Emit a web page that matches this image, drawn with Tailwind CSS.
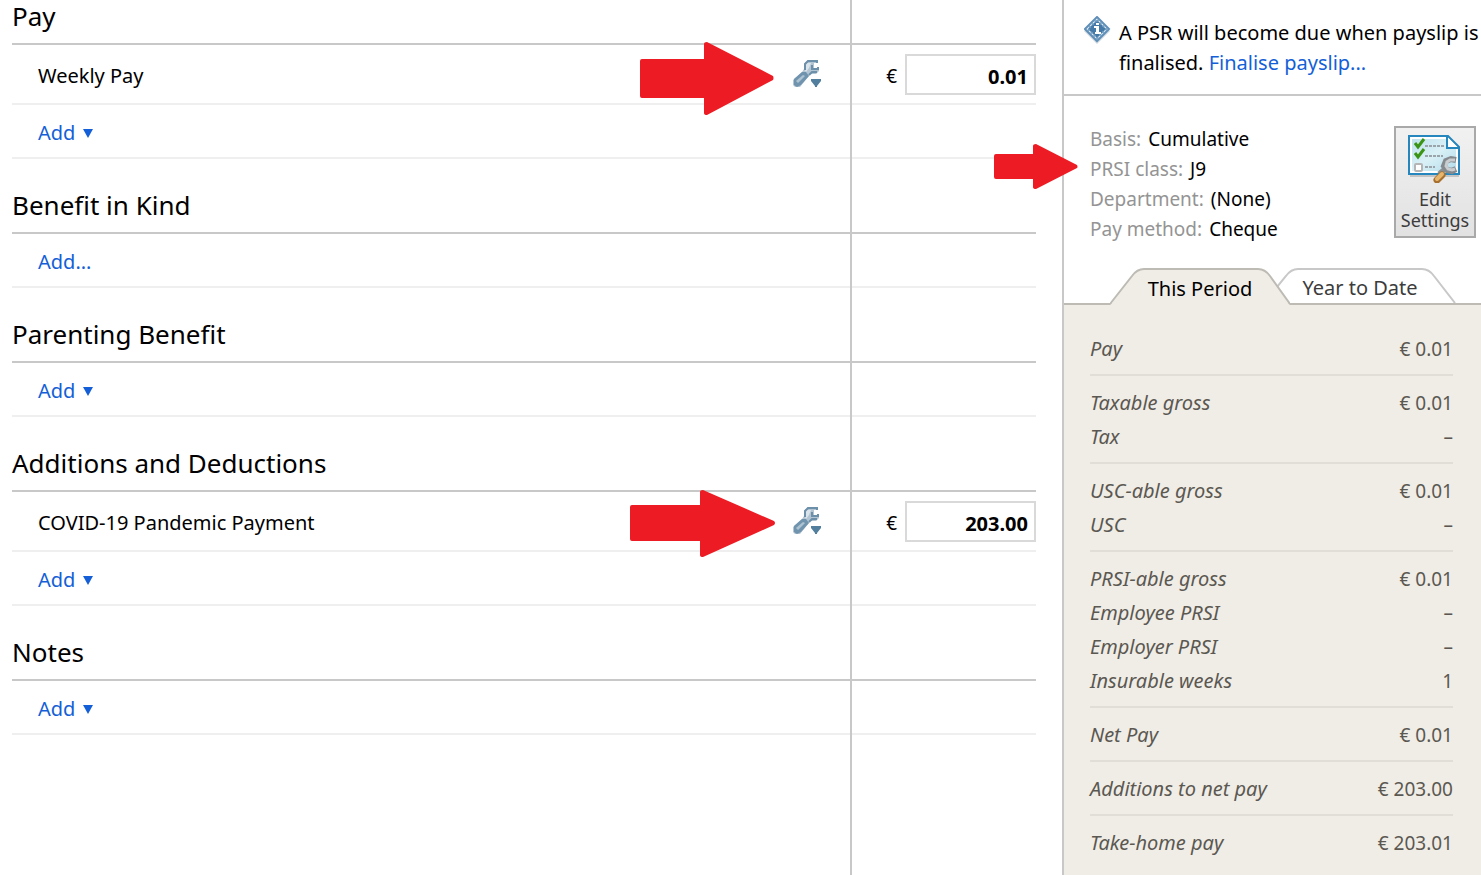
<!DOCTYPE html>
<html lang="en">
<head>
    <meta charset="UTF-8">
    <meta name="viewport" content="width=device-width, initial-scale=1.0">
    <title>Payslip</title>
    <script src="https://cdn.jsdelivr.net/npm/@tailwindcss/browser@4"></script>
</head>
<body class="bg-white text-black font-['Noto_Sans',sans-serif] text-[20px] overflow-x-hidden">

<!-- Shared icons -->
<svg class="hidden">
  <symbol id="wrench" viewBox="0 0 28 28">
    <path d="M15 0h10v3h-4v5h5v3l-3 3h-6l-2 3-8 10H2l-2-2v-5l9-8 2-3V4z" fill="#b3c5d2"/>
    <path d="M1 19l8-7h4l3 4-8 9-4 2-3-2z" fill="#7194ae"/>
    <path d="M3 21l7-6 2 1-7 7z" fill="#aec3d2"/>
    <path d="M14 3h4l-2 5-3 4-1-2V6z" fill="#dbe4ea"/>
    <path d="M12 10V4l3-3h9v2M19 5v4h6v-2M24 12h-5l-3 3" fill="none" stroke="#6d90aa" stroke-width="2"/>
    <path d="M18 19h10v2l-4 5v1h-2v-1l-4-5z" fill="#537f9f"/>
  </symbol>
  <symbol id="caret" viewBox="0 0 10 9">
    <path d="M0 0h10L5 9z" fill="#145fd7"/>
  </symbol>
</svg>

<div class="flex min-h-screen">

  <!-- Payslip lines -->
  <main class="relative flex-1 min-w-0 pl-3 pr-[26px]">
    <div class="absolute inset-y-0 right-[210px] w-[2px] bg-[#c8c8c8] z-10"></div>

    <section>
      <h2 class="h-[45px] flex items-end pb-[10px] border-b-2 border-[#c8c8c8] text-[26px] leading-[34px]">Pay</h2>
      <div class="relative h-[60px] flex items-center border-b-2 border-[#efefef] pl-[26px]">
        <label for="weeklyPay" class="flex-1 pt-[3px]">Weekly Pay</label>
        <svg class="absolute right-[262px] -top-[3px] w-[134px] h-[73px]" viewBox="0 0 134 73"><path d="M2 17H64V2q0-2 3-2L133 34q1 2 0 4L67 73q-3 0-3-2V56H2q-2 0-2-2V19q0-2 2-2z" fill="#ed1c24"/></svg>
        <button type="button" aria-label="Weekly Pay options" class="w-7 mr-[60px]"><svg class="size-7"><use href="#wrench"/></svg></button>
        <div class="w-[155px] flex items-center gap-2">
          <span class="w-4 pt-1 text-right text-[19px]">€</span>
          <input id="weeklyPay" type="text" value="0.01" class="w-[131px] h-[41px] border-2 border-[#d9d9d9] px-[6px] pt-1 text-right font-bold text-[20px]">
        </div>
      </div>
      <div class="h-[54px] flex items-center border-b-2 border-[#efefef] pl-[26px] pt-1">
        <button type="button" class="flex items-center gap-2 text-[#145fd7]">Add <svg class="w-[10px] h-[9px]"><use href="#caret"/></svg></button>
      </div>
    </section>

    <section>
      <h2 class="h-[75px] flex items-end pb-[10px] border-b-2 border-[#c8c8c8] text-[26px] leading-[34px]">Benefit in Kind</h2>
      <div class="h-[54px] flex items-center border-b-2 border-[#efefef] pl-[26px] pt-1">
        <button type="button" class="text-[#145fd7]">Add...</button>
      </div>
    </section>

    <section>
      <h2 class="h-[75px] flex items-end pb-[10px] border-b-2 border-[#c8c8c8] text-[26px] leading-[34px]">Parenting Benefit</h2>
      <div class="h-[54px] flex items-center border-b-2 border-[#efefef] pl-[26px] pt-1">
        <button type="button" class="flex items-center gap-2 text-[#145fd7]">Add <svg class="w-[10px] h-[9px]"><use href="#caret"/></svg></button>
      </div>
    </section>

    <section>
      <h2 class="h-[75px] flex items-end pb-[10px] border-b-2 border-[#c8c8c8] text-[26px] leading-[34px]">Additions and Deductions</h2>
      <div class="relative h-[60px] flex items-center border-b-2 border-[#efefef] pl-[26px]">
        <label for="covidPayment" class="flex-1 pt-[3px]">COVID-19 Pandemic Payment</label>
        <svg class="absolute right-[260px] -top-[2px] w-[146px] h-[67px]" viewBox="0 0 146 67"><path d="M2 15H70V2q0-2 3-2L144 31q2 2 0 4L73 67q-3 0-3-2V51H2q-2 0-2-2V17q0-2 2-2z" fill="#ed1c24"/></svg>
        <button type="button" aria-label="COVID-19 Pandemic Payment options" class="w-7 mr-[60px]"><svg class="size-7"><use href="#wrench"/></svg></button>
        <div class="w-[155px] flex items-center gap-2">
          <span class="w-4 pt-1 text-right text-[19px]">€</span>
          <input id="covidPayment" type="text" value="203.00" class="w-[131px] h-[41px] border-2 border-[#d9d9d9] px-[6px] pt-1 text-right font-bold text-[20px]">
        </div>
      </div>
      <div class="h-[54px] flex items-center border-b-2 border-[#efefef] pl-[26px] pt-1">
        <button type="button" class="flex items-center gap-2 text-[#145fd7]">Add <svg class="w-[10px] h-[9px]"><use href="#caret"/></svg></button>
      </div>
    </section>

    <section>
      <h2 class="h-[75px] flex items-end pb-[10px] border-b-2 border-[#c8c8c8] text-[26px] leading-[34px]">Notes</h2>
      <div class="h-[54px] flex items-center border-b-2 border-[#efefef] pl-[26px] pt-1">
        <button type="button" class="flex items-center gap-2 text-[#145fd7]">Add <svg class="w-[10px] h-[9px]"><use href="#caret"/></svg></button>
      </div>
    </section>
  </main>

  <!-- Summary -->
  <aside class="w-[419px] shrink-0 border-l-2 border-[#c8c8c8] flex flex-col">

    <div class="flex gap-2 pl-5 pt-[18px] pb-4 border-b-2 border-[#c8c8c8] leading-[30px]">
      <svg class="w-[27px] h-7 shrink-0 -mt-[2px]" viewBox="0 0 27 28">
        <path d="M13 3L26 15 13 28 0 15z" fill="#cfd8df"/>
        <path d="M13 1L25 13 13 25 1 13z" fill="#e9f1f7" stroke="#5f8fb8" stroke-width="2"/>
        <path d="M13 4L22 13 13 22 4 13z" fill="#4479a8" stroke="#6f9cc0" stroke-width="2" stroke-dasharray="2 2"/>
        <path d="M12 7h3v2h-3zM10 10h5v6h2v2h-6v-2h1v-4h-2z" fill="#fff"/>
      </svg>
      <p class="whitespace-nowrap">A PSR will become due when payslip is<br>finalised. <a href="#" class="text-[#145fd7]">Finalise payslip...</a></p>
    </div>

    <div class="relative flex justify-between pl-[26px] pr-[5px] pt-7 pb-[26px]">
      <svg class="absolute -left-[70px] top-12 w-[84px] h-[45px]" viewBox="0 0 84 45"><path d="M2 10H39V2q0-2 3-2L83 21q1 2 0 3L42 45q-3 0-3-2V35H2q-2 0-2-2V12q0-2 2-2z" fill="#ed1c24"/></svg>
      <dl class="text-[19px] leading-[30px]">
        <div class="flex gap-[7px]"><dt class="text-[#949494]">Basis:</dt><dd>Cumulative</dd></div>
        <div class="flex gap-[7px]"><dt class="text-[#949494]">PRSI class:</dt><dd>J9</dd></div>
        <div class="flex gap-[7px]"><dt class="text-[#949494]">Department:</dt><dd>(None)</dd></div>
        <div class="flex gap-[7px]"><dt class="text-[#949494]">Pay method:</dt><dd>Cheque</dd></div>
      </dl>
      <button type="button" class="w-[82px] h-28 mt-[2px] border-2 border-[#a9a9a9] bg-linear-to-b from-[#f1f1f1] to-[#e2e2e2] flex flex-col items-center pt-[7px] text-[18px] leading-[21px] text-[#3c3c3c]">
        <svg class="w-[54px] h-[48px] mb-[6px] shrink-0" viewBox="0 0 54 48">
          <defs><linearGradient id="sheet" x1="0" y1="0" x2="1" y2="1"><stop offset="0" stop-color="#bfe2ee"/><stop offset=".5" stop-color="#d9f0f6"/><stop offset="1" stop-color="#b4dcea"/></linearGradient></defs>
          <path d="M2 40h49v2H2z" fill="#c4c4c4"/>
          <path d="M1 1h39l11 11v27H1z" fill="#fff" stroke="#2587bd" stroke-width="2"/>
          <path d="M4 4h34v10h10v22H4z" fill="url(#sheet)"/>
          <path d="M39 2v11h11" fill="#fff" stroke="#2587bd" stroke-width="2"/>
          <path d="M17 11h19M17 21h18M17 32h10" stroke="#9aa4aa" stroke-width="2" stroke-dasharray="3 1"/>
          <path d="M7 8l3 4 6-8M7 18l3 4 6-8" fill="none" stroke="#3c9414" stroke-width="3"/>
          <rect x="7" y="29" width="7" height="7" rx="1" fill="#fff" stroke="#b5b5b5" stroke-width="2"/>
          <path d="M31 39l7-6" stroke="#8b9094" stroke-width="5"/>
          <path d="M48 25l-5-1-5 2-2 5 3 4 5 1 4-2" fill="none" stroke="#858a8e" stroke-width="6"/>
          <path d="M47 25l-5 0-3 2-1 4 2 3 4 1 3-1" fill="none" stroke="#c9cdd0" stroke-width="3"/>
          <path d="M29 45l5-5" stroke="#a8702c" stroke-width="7" stroke-linecap="round"/>
          <path d="M29 44l5-5" stroke="#e8b56c" stroke-width="4" stroke-linecap="round"/>
        </svg>
        Edit<br>Settings
      </button>
    </div>

    <!-- Tabs -->
    <div role="tablist" class="flex h-[37px] mt-[-2px] pl-[46px] border-b-2 border-[#bdbbb4]">
      <button type="button" role="tab" aria-selected="true" class="relative z-10 w-[180px] h-[37px] pt-[5px] shrink-0">
        <svg class="absolute inset-0 w-[180px] h-[37px]" viewBox="0 0 180 37"><path d="M0 37L1 36 22 8Q27 1 34 1H148Q155 1 160 8L179 36 180 37z" fill="#f0ede6"/><path d="M0 36L22 8Q27 1 34 1H148Q155 1 160 8L180 36" fill="none" stroke="#bdbbb4" stroke-width="2"/></svg>
        <span class="relative">This Period</span>
      </button>
      <button type="button" role="tab" aria-selected="false" class="relative w-[192px] h-[35px] pt-1 -ml-[26px] shrink-0 text-[#3c3c3c]">
        <svg class="absolute inset-0 w-[192px] h-[35px]" viewBox="0 0 192 35"><path d="M0 35L22 8Q27 1 34 1H158Q165 1 170 8L191 35" fill="#fff" stroke="#c8c8c8" stroke-width="2"/></svg>
        <span class="relative">Year to Date</span>
      </button>
    </div>

    <!-- Totals -->
    <div class="flex-1 bg-[#f0ede6] pl-[26px] pr-7 pt-[17px] text-[#5b5852]">
      <table class="w-full border-separate border-spacing-0 leading-[34px] [&_th]:text-left [&_th]:font-normal [&_th]:italic [&_td]:text-right [&_td]:text-[19px] [&_tr:first-child>*]:pt-[10px] [&_tr:last-child>*]:pb-2 [&_tr:last-child>*]:border-b-2 [&_tr>*]:border-[#e1ded7]">
        <tbody>
          <tr><th scope="row">Pay</th><td>€ 0.01</td></tr>
        </tbody>
        <tbody>
          <tr><th scope="row">Taxable gross</th><td>€ 0.01</td></tr>
          <tr><th scope="row">Tax</th><td>–</td></tr>
        </tbody>
        <tbody>
          <tr><th scope="row">USC-able gross</th><td>€ 0.01</td></tr>
          <tr><th scope="row">USC</th><td>–</td></tr>
        </tbody>
        <tbody>
          <tr><th scope="row">PRSI-able gross</th><td>€ 0.01</td></tr>
          <tr><th scope="row">Employee PRSI</th><td>–</td></tr>
          <tr><th scope="row">Employer PRSI</th><td>–</td></tr>
          <tr><th scope="row">Insurable weeks</th><td>1</td></tr>
        </tbody>
        <tbody>
          <tr><th scope="row">Net Pay</th><td>€ 0.01</td></tr>
        </tbody>
        <tbody>
          <tr><th scope="row">Additions to net pay</th><td>€ 203.00</td></tr>
        </tbody>
        <tfoot>
          <tr class="[&>*]:border-none"><th scope="row">Take-home pay</th><td>€ 203.01</td></tr>
        </tfoot>
      </table>
    </div>
  </aside>
</div>

</body>
</html>
